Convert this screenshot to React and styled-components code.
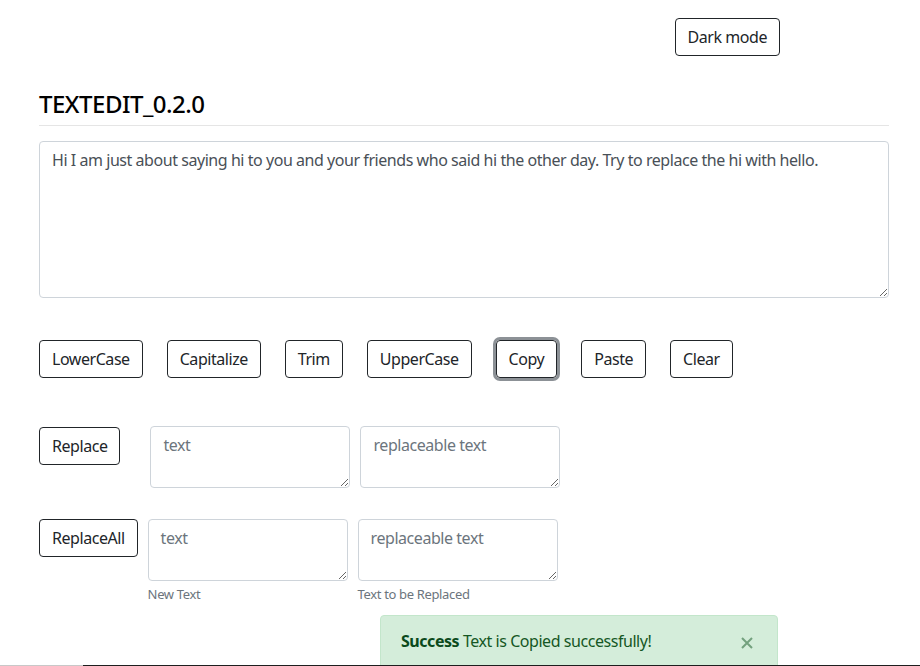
import React from "react";
import styled, { createGlobalStyle, css } from "styled-components";

const GlobalStyle = createGlobalStyle`
  html, body {
    margin: 0;
    background: #fff;
    color: #212529;
    font-family: "Noto Sans", "Liberation Sans", sans-serif;
    font-size: 16px;
    line-height: 1.5;
    letter-spacing: -0.45px;
  }
  * { box-sizing: border-box; }
  button, textarea { letter-spacing: -0.45px; }
`;

const Nav = styled.nav`
  display: flex;
  justify-content: flex-end;
  padding: 18px 140px 0 0;
`;

const Btn = styled.button`
  font-family: inherit;
  font-size: 16px;
  line-height: 24px;
  color: #212529;
  background: transparent;
  border: 1px solid #212529;
  border-radius: 4px;
  padding: 6px 12px;
  height: 38px;
  cursor: pointer;
  flex: none;
  ${(p) =>
    p.focused &&
    css`
      box-shadow: 0 0 0 3px #8c9196;
    `}
`;

const Container = styled.main`
  padding: 0 31px 0 39px;
`;

const Title = styled.h4`
  margin: 34px 0 0;
  font-size: 24px;
  font-weight: 500;
  line-height: 1.2;
  color: #000;
  letter-spacing: -0.5px;
`;

const Divider = styled.hr`
  margin: 6px 0 0;
  border: 0;
  border-top: 1px solid #e5e5e5;
`;

const TextBox = styled.textarea`
  display: block;
  width: ${(p) => p.w || "100%"};
  height: ${(p) => p.h}px;
  margin: ${(p) => p.m || 0};
  padding: 6px 12px;
  font-family: inherit;
  font-size: 16px;
  line-height: 24px;
  color: #495057;
  border: 1px solid #ced4da;
  border-radius: 4px;
  background: #fff;
  &::placeholder {
    color: #6c757d;
  }
`;

const ButtonRow = styled.div`
  display: flex;
  gap: 24px;
  margin-top: 42px;
`;

const ReplaceRow = styled.div`
  display: flex;
  align-items: flex-start;
  margin-top: ${(p) => p.top}px;
`;

const Field = styled.div`
  display: flex;
  flex-direction: column;
  margin-left: ${(p) => p.left}px;
`;

const Hint = styled.small`
  margin-top: 3px;
  font-size: 13px;
  line-height: 20px;
  color: #6c757d;
  letter-spacing: -0.35px;
`;

const Alert = styled.div`
  position: fixed;
  left: 380px;
  top: 615px;
  width: 398px;
  padding: 13px 20px 16px;
  background: #d4edda;
  border: 1px solid #c3e6cb;
  border-radius: 4px;
  color: #155724;
  font-size: 16px;
  line-height: 24px;
  strong {
    font-weight: 700;
    color: #0b4a1c;
  }
`;

const Close = styled.button`
  position: absolute;
  top: 21px;
  right: 24px;
  width: 12px;
  height: 12px;
  padding: 0;
  border: 0;
  background: transparent;
  display: flex;
  opacity: 0.5;
  cursor: pointer;
`;

const BottomEdge = styled.div`
  position: fixed;
  left: 0;
  right: 0;
  bottom: 0;
  height: 1px;
  background: linear-gradient(to right, #c8c8c8 0, #c8c8c8 83px, #1e1e1e 83px);
`;

const actions = ["LowerCase", "Capitalize", "Trim", "UpperCase", "Copy", "Paste", "Clear"];

const sample =
  "Hi I am just about saying hi to you and your friends who said hi the other day. Try to replace the hi with hello.";

export default function App() {
  return (
    <>
      <GlobalStyle />
      <Nav>
        <Btn>Dark mode</Btn>
      </Nav>
      <Container>
        <Title>TEXTEDIT_0.2.0</Title>
        <Divider />
        <TextBox h={157} m="15px 0 0" defaultValue={sample} />
        <ButtonRow>
          {actions.map((a) => (
            <Btn key={a} focused={a === "Copy"}>
              {a}
            </Btn>
          ))}
        </ButtonRow>
        <ReplaceRow top={48}>
          <Btn style={{ marginTop: 1 }}>Replace</Btn>
          <Field left={30}>
            <TextBox w="200px" h={62} placeholder="text" />
          </Field>
          <Field left={10}>
            <TextBox w="200px" h={62} placeholder="replaceable text" />
          </Field>
        </ReplaceRow>
        <ReplaceRow top={31}>
          <Btn>ReplaceAll</Btn>
          <Field left={10}>
            <TextBox w="200px" h={62} placeholder="text" />
            <Hint>New Text</Hint>
          </Field>
          <Field left={10}>
            <TextBox w="200px" h={62} placeholder="replaceable text" />
            <Hint>Text to be Replaced</Hint>
          </Field>
        </ReplaceRow>
      </Container>
      <Alert role="alert">
        <strong>Success</strong> Text is Copied successfully!
        <Close aria-label="Close">
          <svg width="12" height="12" viewBox="0 0 12 12">
            <path d="M1 1 L11 11 M11 1 L1 11" stroke="#155724" strokeWidth="2" />
          </svg>
        </Close>
      </Alert>
      <BottomEdge />
    </>
  );
}
